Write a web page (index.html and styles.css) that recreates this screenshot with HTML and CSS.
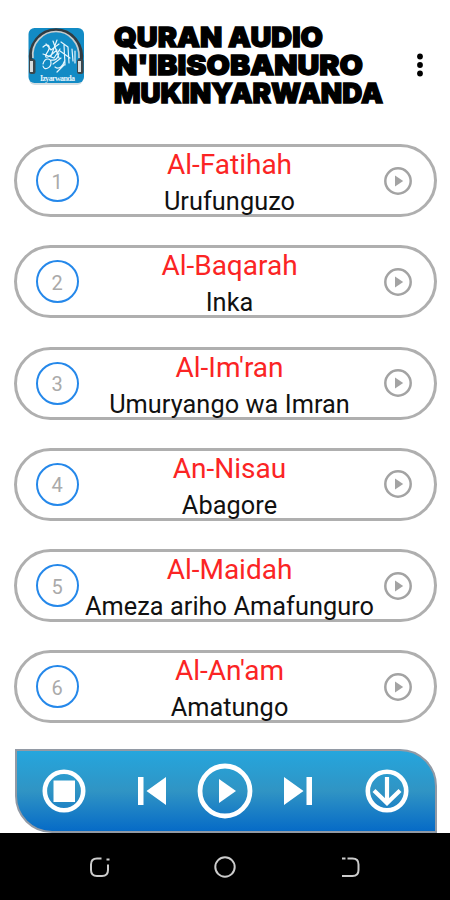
FILE: index.html
```html
<!DOCTYPE html>
<html lang="rw">
<head>
<meta charset="utf-8">
<title>Quran Audio</title>
<link rel="stylesheet" href="styles.css">
</head>
<body>
<svg width="0" height="0" class="defs"><symbol id="play" viewBox="0 0 28 28"><circle cx="14" cy="14" r="12.7" fill="none" stroke="#a3a3a3" stroke-width="2.5"/><path d="M11 8.4L19.2 14L11 19.6Z" fill="#a3a3a3"/></symbol></svg>
<header class="header">
  <svg class="logo" viewBox="0 0 60 62" aria-hidden="true">
    <rect x="3" y="4" width="54" height="55" rx="6" fill="#d3dde2"/>
    <rect x="2.500" y="2" width="55.500" height="55" rx="6" fill="#128bc5"/>
    <path d="M5 37C2 18 15 4 30 4S58 18 55 37" fill="none" stroke="#303b42" stroke-width="3.500"/>
    <path d="M7 32C5 17 17 5.500 30 5.500S54 17 53 32" fill="none" stroke="#c5cdd0" stroke-width="1.700"/>
    <rect x="3" y="33" width="6.500" height="15" rx="2.500" fill="#3c464b"/><rect x="51" y="33" width="6.500" height="15" rx="2.500" fill="#3c464b"/>
    <path d="M5.500 35v11M53.500 35v11" stroke="#d8dddf" stroke-width="3"/>
    <g fill="none" stroke="#e5f5fc" stroke-width="1.200" stroke-linecap="round">
      <path d="M17 21c4-4 7-2 6 2s-5 6-3 8 8-5 11-7M20 18l5 6 8-6M17 28l11 4 6-9M27 15l6 17M31 14l-6 16M17 38c2-7 8-6 8-1s-7 8-8 3M25 34c5 1 7-2 8-7M27 38l8-6M38 19l1 20M42 21l1 16M46 23l1 12M49 25v12M35 16l7 5M34 25l10 7M29 41c4 3 8-1 10-7M31 46l7-7"/>
    </g>
    <text x="14" y="54.500" class="logo-text" textLength="35">Izyarwanda</text>
  </svg>
  <svg class="title" viewBox="0 0 280 90" role="heading">
    <text x="1" y="24.500" textLength="209" lengthAdjust="spacingAndGlyphs">QURAN AUDIO</text>
    <text x="1" y="52.500" textLength="249" lengthAdjust="spacingAndGlyphs">N'IBISOBANURO</text>
    <text x="1" y="80.500" textLength="269" lengthAdjust="spacingAndGlyphs">MUKINYARWANDA</text>
  </svg>
  <svg class="more" viewBox="0 0 8 24"><circle cx="4" cy="3.500" r="2.900"/><circle cx="4" cy="12" r="2.900"/><circle cx="4" cy="20.500" r="2.900"/></svg>
</header>
<main class="list">
  <div class="row"><span class="num">1</span><div class="names"><div class="ar">Al-Fatihah</div><div class="rw">Urufunguzo</div></div><svg class="play"><use href="#play"/></svg></div>
  <div class="row"><span class="num">2</span><div class="names"><div class="ar">Al-Baqarah</div><div class="rw">Inka</div></div><svg class="play"><use href="#play"/></svg></div>
  <div class="row"><span class="num">3</span><div class="names"><div class="ar">Al-Im'ran</div><div class="rw">Umuryango wa Imran</div></div><svg class="play"><use href="#play"/></svg></div>
  <div class="row"><span class="num">4</span><div class="names"><div class="ar">An-Nisau</div><div class="rw">Abagore</div></div><svg class="play"><use href="#play"/></svg></div>
  <div class="row"><span class="num">5</span><div class="names"><div class="ar">Al-Maidah</div><div class="rw">Ameza ariho Amafunguro</div></div><svg class="play"><use href="#play"/></svg></div>
  <div class="row"><span class="num">6</span><div class="names"><div class="ar">Al-An'am</div><div class="rw">Amatungo</div></div><svg class="play"><use href="#play"/></svg></div>
</main>
<div class="player">
  <svg class="btn" viewBox="0 0 44 44"><circle cx="22" cy="22" r="19.200" fill="none" stroke="#fff" stroke-width="4.600"/><path d="M11.500 11.500h21.500v21.500H11.500Z" fill="#fff"/></svg>
  <svg class="skip" viewBox="0 0 30 30"><path d="M1 1h5.500v28H1ZM29 1v28L9.500 15Z" fill="#fff"/></svg>
  <svg class="big" viewBox="0 0 56 56"><circle cx="28" cy="28" r="25" fill="none" stroke="#fff" stroke-width="4.800"/><path d="M22 16L39 28L22 40Z" fill="#fff"/></svg>
  <svg class="skip" viewBox="0 0 30 30"><path d="M1 1v28L20.500 15ZM23.500 1H29v28h-5.500Z" fill="#fff"/></svg>
  <svg class="btn" viewBox="0 0 44 44"><circle cx="22" cy="22" r="19.200" fill="none" stroke="#fff" stroke-width="4.600"/><path d="M22 8v26M9 21.500L22 34L35 21.500" fill="none" stroke="#fff" stroke-width="4.200"/></svg>
</div>
<nav class="nav">
  <svg viewBox="0 0 24 24"><path d="M13.500 3.500H9Q3 3.500 3 9.500v5.500q0 6 6 6h5q6 0 6-6V9.500M18.500 4.500h3" /></svg>
  <svg viewBox="0 0 24 24"><circle cx="12" cy="12" r="9.700"/></svg>
  <svg viewBox="0 0 24 24"><path d="M4 3.500h3.500M9.500 3.500h5q6 0 6 6v5.500q0 6-6 6H4"/></svg>
</nav>
</body>
</html>
```

FILE: styles.css
```css
* { box-sizing: border-box; }
body {
  margin: 0;
  width: 450px;
  height: 900px;
  overflow: hidden;
  background: #fff;
  font-family: Roboto, sans-serif;
  display: flex;
  flex-direction: column;
}
svg { display: block; flex: none; }
.defs { position: absolute; }
.header {
  height: 144px;
  flex: none;
  display: flex;
  align-items: flex-start;
  padding: 22px 0 0 26px;
}
.logo { width: 60px; height: 62px; margin-top: 4px; }
.logo-text { font: 700 8px "Liberation Serif", serif; fill: #e5f5fc; }
.title { width: 280px; height: 90px; margin-left: 27px; }
.title text {
  font: 900 27px Inter, sans-serif;
  stroke: #000;
  stroke-width: 1.3px;
}
.more { width: 8px; height: 24px; margin: 31px 0 0 22.5px; }
.list {
  flex: none;
  display: flex;
  flex-direction: column;
  gap: 28.3px;
  height: 605px;
  padding: 0 13.5px 0 14px;
}
.row {
  height: 73px;
  flex: none;
  border: 3px solid #afafaf;
  border-radius: 37px;
  display: grid;
  grid-template-columns: 43px 1fr 28px;
  grid-template-rows: 67px;
  align-items: center;
  padding: 0 22px 0 18.5px;
}
.num {
  width: 43px;
  height: 43px;
  border: 2px solid #2588ea;
  border-radius: 50%;
  display: flex;
  align-items: center;
  justify-content: center;
  padding-top: 2px;
  font-size: 20px;
  color: #aaa;
}
.names {
  text-align: center;
  white-space: nowrap;
  display: flex;
  flex-direction: column;
  align-items: center;
  width: 306px;
  margin: 3px 0 -3px -2px;
}
.ar { font-size: 28px; line-height: 36px; color: #fb2424; }
.rw { font-size: 25.3px; line-height: 37px; color: #111; letter-spacing: .06px; }
.play { width: 28px; height: 28px; }
.player {
  flex: none;
  height: 84px;
  margin: 0 13.5px 0 14.5px;
  border: 2px solid #929aa5;
  border-radius: 0 37px 0 37px;
  background: linear-gradient(#25a6dd, #3094c4 50%, #066bc7);
  display: flex;
  align-items: center;
  padding: 0 25px;
}
.btn { width: 44px; height: 44px; }
.skip { width: 30px; height: 30px; }
.big { width: 56px; height: 56px; margin: 0 30px; }
.btn:first-child { margin-right: 51px; }
.btn:last-child { margin-left: 52px; }
.nav {
  flex: 1;
  background: #000;
  display: flex;
  align-items: center;
  justify-content: space-between;
  padding: 0 88px;
}
.nav svg {
  width: 24px;
  height: 24px;
  fill: none;
  stroke: #ccc;
  stroke-width: 2;
}
```
